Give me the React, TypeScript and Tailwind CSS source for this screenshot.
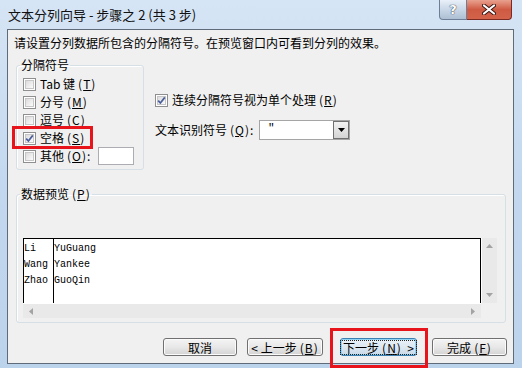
import type React from "react"

function CheckBox({ checked = false }: { checked?: boolean }) {
  return (
    <span className="flex h-[13px] w-[13px] shrink-0 items-center justify-center border border-[#8f8f8f] bg-white p-[1px]">
      <span className="relative h-full w-full border border-[#c6c6c6] bg-gradient-to-br from-[#dcdcdc] to-[#fbfbfb]">
        {checked && (
          <svg className="absolute -left-[1px] -top-[1px]" width="9" height="9" viewBox="0 0 9 9">
            <path d="M1.2 4.6 L3.4 7 L7.8 1.4" fill="none" stroke="#4a5e9c" strokeWidth="1.7" />
          </svg>
        )}
      </span>
    </span>
  )
}

function Key({ k }: { k: string }) {
  return (
    <span className="ml-[3px] tracking-[1px]">
      (<u className="underline-offset-1">{k}</u>)
    </span>
  )
}

function Option({ label, k, checked, children }: { label: string; k: string; checked?: boolean; children?: React.ReactNode }) {
  return (
    <div className="flex h-[18px] items-center">
      <CheckBox checked={checked} />
      <span className="ml-[4px] whitespace-pre">
        {label}
        <Key k={k} />
      </span>
      {children}
    </div>
  )
}

function Button({ children, focused = false, width }: { children: React.ReactNode; focused?: boolean; width: string }) {
  return (
    <div
      className={`flex h-[18px] items-center justify-center rounded-[3px] border ${width} ${
        focused
          ? "border-[#3c7fb1] bg-gradient-to-b from-[#eaf1f8] via-[#dde8f2] to-[#c9d9e8] shadow-[inset_0_0_0_1px_#8fd4f5]"
          : "border-[#707070] bg-gradient-to-b from-[#f4f4f4] via-[#e8e8e8] to-[#d3d3d3] shadow-[inset_0_0_0_1px_#fbfbfb]"
      }`}
    >
      <span className={`whitespace-pre px-[2px] leading-[13px] ${focused ? "outline outline-1 outline-dotted outline-[#222]" : ""}`}>{children}</span>
    </div>
  )
}

export default function App() {
  return (
    <div className="relative h-[368px] w-[522px] overflow-hidden bg-gradient-to-b from-[#d6e5f5] via-[#c3d8ef] to-[#bcd3ec] font-['Noto_Sans_CJK_SC',sans-serif] text-[12px] text-black">
      {/* title bar */}
      <div className="flex h-[29px]">
        <div className="whitespace-pre pl-[8px] pt-[6px] text-[13px] leading-[17px] text-[#111]">文本分列向导 - 步骤之 2 (共 3 步)</div>
        <div className="ml-auto mr-[10px] flex h-[20px]">
          <div className="flex w-[28px] items-center justify-center rounded-bl-[4px] border border-t-0 border-[#6d7f96] bg-gradient-to-b from-[#e9f0f8] via-[#c9d7e7] to-[#aebfd4] font-['DejaVu_Sans',sans-serif] text-[13px] font-bold text-white [text-shadow:0_0_1px_#2a3443,0_0_1px_#2a3443]">
            ?
          </div>
          <div className="flex w-[45px] items-center justify-center rounded-br-[4px] border border-l-0 border-t-0 border-[#7d2b22] bg-gradient-to-b from-[#e8a18f] via-[#cf5a43] to-[#d3634a]">
            <svg width="14" height="11" viewBox="0 0 14 11">
              <path d="M2 1.5 L12 9.5 M12 1.5 L2 9.5" stroke="#3b1410" strokeWidth="4" strokeLinecap="round" />
              <path d="M2 1.5 L12 9.5 M12 1.5 L2 9.5" stroke="#ffffff" strokeWidth="2.2" strokeLinecap="round" />
            </svg>
          </div>
        </div>
      </div>

      {/* client area */}
      <div className="ml-[7px] h-[335px] w-[507px] border border-[#5f6b78] bg-[#f0f0f0]">
        <div className="ml-[6px] mt-[5px] leading-[16px]">请设置分列数据所包含的分隔符号。在预览窗口内可看到分列的效果。</div>

        <div className="mt-[7px] flex">
          <fieldset className="ml-[8px] h-[112px] w-[128px] rounded-[3px] border border-[#d5dfe5] shadow-[inset_1px_1px_0_#fff]">
            <legend className="ml-[3px] px-[1px] leading-[14px]">分隔符号</legend>
            <div className="ml-[6px] pt-[3px]">
              <Option label="Tab 键" k="T" />
              <Option label="分号" k="M" />
              <Option label="逗号" k="C" />
              <Option label="空格" k="S" checked />
              <Option label="其他" k="O">
                <span>:</span>
                <span className="ml-[8px] h-[18px] w-[36px] border border-[#abadb3] bg-white" />
              </Option>
            </div>
          </fieldset>

          <div className="ml-[11px] flex flex-col">
            <div className="mt-[33px]">
              <Option label="连续分隔符号视为单个处理" k="R" checked />
            </div>
            <div className="mt-[11px] flex h-[20px] items-center">
              <span className="w-[104px]">
                文本识别符号<Key k="Q" />:
              </span>
              <div className="flex h-[20px] w-[91px] border border-[#a5a5a5] bg-white">
                <span className="flex-1 pl-[8px] font-['Liberation_Mono',monospace] text-[11px] leading-[14px]">"</span>
                <span className="flex w-[16px] items-center justify-center border border-[#707070] bg-gradient-to-b from-[#f2f2f2] to-[#d4d4d4]">
                  <svg width="7" height="4" viewBox="0 0 7 4">
                    <path d="M0 0 H7 L3.5 4 Z" fill="#000" />
                  </svg>
                </span>
              </div>
            </div>
          </div>
        </div>

        <fieldset className="ml-[8px] mt-[17px] h-[136px] w-[490px] rounded-[3px] border border-[#d5dfe5] shadow-[inset_1px_1px_0_#fff]">
          <legend className="ml-[3px] px-[1px] leading-[14px]">
            数据预览<Key k="P" />
          </legend>
          <div className="ml-[6px] mt-[37px] grid w-[474px] grid-cols-[458px_16px] grid-rows-[65px_15px]">
            <div className="flex border-l border-r border-t border-black bg-white pt-[2px] font-['Liberation_Mono',monospace] text-[10px] leading-[16px]">
              <div className="w-[29px]">
                <div>Li</div>
                <div>Wang</div>
                <div>Zhao</div>
              </div>
              <div className="-mt-[2px] flex-1 border-l border-black pt-[2px]">
                <div>YuGuang</div>
                <div>Yankee</div>
                <div>GuoQin</div>
              </div>
            </div>
            <div className="flex flex-col items-center justify-between border-l border-white bg-[#e9e9e9] py-[6px]">
              <svg width="7" height="4" viewBox="0 0 7 4">
                <path d="M0 4 H7 L3.5 0 Z" fill="#a3a3a3" />
              </svg>
              <svg width="7" height="4" viewBox="0 0 7 4">
                <path d="M0 0 H7 L3.5 4 Z" fill="#a3a3a3" />
              </svg>
            </div>
            <div className="flex items-center justify-between border-t border-white bg-[#e9e9e9] px-[6px]">
              <svg width="4" height="7" viewBox="0 0 4 7">
                <path d="M4 0 V7 L0 3.5 Z" fill="#a3a3a3" />
              </svg>
              <svg width="4" height="7" viewBox="0 0 4 7">
                <path d="M0 0 V7 L4 3.5 Z" fill="#a3a3a3" />
              </svg>
            </div>
            <div className="bg-[#f0f0f0]" />
          </div>
        </fieldset>

        <div className="mt-[15px] flex">
          <div className="ml-[155px]">
            <Button width="w-[74px]">取消</Button>
          </div>
          <div className="ml-[10px]">
            <Button width="w-[76px]">
              {"< 上一步"}
              <Key k="B" />
            </Button>
          </div>
          <div className="ml-[17px]">
            <Button width="w-[77px]" focused>
              下一步<Key k="N" />
              {"  >"}
            </Button>
          </div>
          <div className="ml-[15px]">
            <Button width="w-[75px]">
              完成<Key k="F" />
            </Button>
          </div>
        </div>
      </div>

      {/* annotation overlays */}
      <div className="absolute left-[12px] top-[126px] h-[23px] w-[81px] border-[3px] border-[#e8141c]" />
      <div className="absolute left-[330px] top-[328px] h-[40px] w-[98px] border-[3px] border-[#e8141c]" />
    </div>
  )
}
